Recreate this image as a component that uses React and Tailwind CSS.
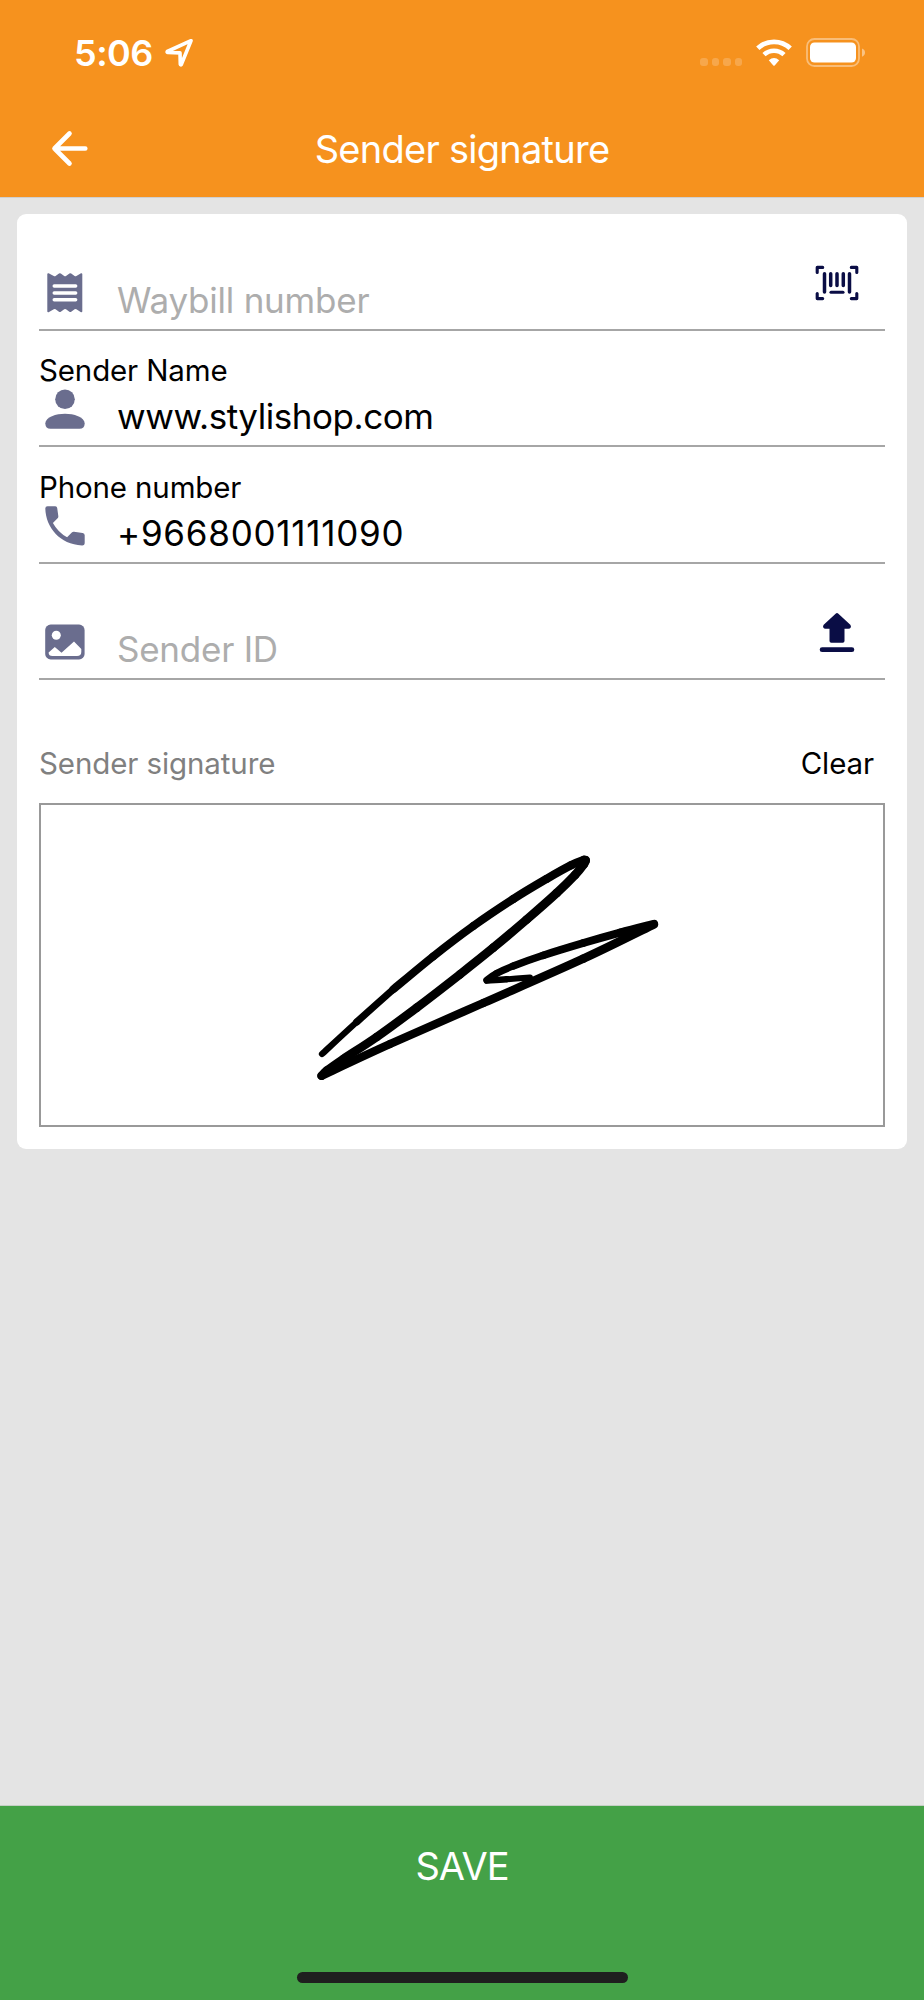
const NAVY = "#0a0d45"
const SLATE = "#6a6d8e"

// Recorded pen strokes, in signature pad pixels. Pen width goes from -> to.
const STROKES = [
  { from: 5.8, to: 7.6, points: [[281, 249], [315.7, 217], [352.3, 184.3]] },
  { from: 7.8, to: 8.6, points: [[352.3, 184.3], [392.3, 151.3], [432.3, 121], [472.3, 94], [505.7, 73.8], [530, 60.3], [543, 55]] },
  { from: 8.8, to: 8.6, points: [[543, 55], [544.6, 55.4], [543, 59], [534, 70], [515.7, 88], [485.7, 114.5], [452.3, 142.7], [419, 169.3], [375.7, 202.7], [335.7, 232], [302.3, 254], [286, 265.500], [280.5, 270.8]] },
  { from: 8.2, to: 8.6, points: [[280.5, 270.8], [349, 239], [442.3, 198], [542.3, 153.7], [613, 119.3]] },
  { from: 8.2, to: 6.8, points: [[613, 118.8], [579, 127.6], [542.3, 138], [502.3, 150.3], [472.3, 161], [455.7, 168.3], [445.8, 175]] },
  { from: 7, to: 5.6, points: [[445.8, 175.5], [465.7, 174.3], [489, 172.5]] },
]

// Catmull-Rom, one curve for each pair of points
function strokeCurves(pts) {
  return pts.slice(0, -1).map((p1, i) => {
    const p0 = pts[i - 1] || p1
    const p2 = pts[i + 1]
    const p3 = pts[i + 2] || p2
    return `M${p1[0]} ${p1[1]}C${p1[0] + (p2[0] - p0[0]) / 6} ${p1[1] + (p2[1] - p0[1]) / 6} ${p2[0] - (p3[0] - p1[0]) / 6} ${p2[1] - (p3[1] - p1[1]) / 6} ${p2[0]} ${p2[1]}`
  })
}

function ReceiptIcon() {
  return (
    <svg width="52" height="42" viewBox="0 0 52 42" fill={SLATE}>
      <path d="M8.3 2Q8.500 1 9.600 1.300L14.800 3.900Q15.700 4.400 16.600 3.900L20 1.600Q20.900 1.100 21.800 1.600L25.200 3.900Q26.100 4.400 27 3.900L30.400 1.600Q31.300 1.100 32.200 1.600L35.600 3.900Q36.500 4.400 37.400 3.900L42 1.300Q43.100 1 43.300 2V39.500Q43.100 40.500 42 40.200L37.400 37.300Q36.500 36.800 35.600 37.300L32.200 39.700Q31.300 40.300 30.400 39.700L27 37.300Q26.100 36.800 25.200 37.300L21.800 39.700Q20.900 40.300 20 39.700L16.600 37.300Q15.700 36.800 14.800 37.300L9.600 40.200Q8.500 40.500 8.300 39.500z" />
      <path d="M15.200 14h21.500M15.200 21h21.500M15.200 27.700h21.500" stroke="#fff" strokeWidth="3.400" strokeLinecap="round" />
    </svg>
  )
}

function PersonIcon() {
  return (
    <svg width="52" height="42" viewBox="0 0 52 42" fill={SLATE}>
      <circle cx="26" cy="11.300" r="9.800" />
      <path d="M6.300 35.500C6.300 29 17.500 25.800 26 25.800S45.700 29 45.700 35.500Q45.500 40.800 40.500 40.800H11.500Q6.500 40.800 6.300 35.500z" />
    </svg>
  )
}

function PhoneIcon() {
  return (
    <svg width="52" height="42" viewBox="0 0 52 42" fill={SLATE}>
      <path d="M8.500 1.300H16.300Q18 1.300 18.200 3L19.300 11Q19.500 12.300 18.600 13.200L13.900 17.900Q19 27.200 28.100 32.200L32.800 27.500Q33.700 26.600 35 26.800L43.600 28Q45.700 28.300 45.700 30.300V37.800Q45.700 40.500 43 40.400C21 39.500 6.800 22.500 6.300 3.500Q6.300 1.300 8.500 1.300z" />
    </svg>
  )
}

function ImageIcon() {
  return (
    <svg width="52" height="42" viewBox="0 0 52 42">
      <rect x="6.200" y="3.600" width="39.400" height="34.800" rx="5.500" fill={SLATE} />
      <circle cx="17.300" cy="14.200" r="4.500" fill="#fff" />
      <path d="M9.600 31.500 15.800 26 22.500 31.700 35 20.600 42.300 28V31Q42.300 35.100 38 35.100H13.500Q9.600 35.100 9.600 31.500z" fill="#fff" />
    </svg>
  )
}

function BarcodeIcon() {
  return (
    <svg width="44" height="46" viewBox="0 0 44 46" fill="none" stroke={NAVY} strokeLinecap="round" strokeLinejoin="round">
      <path d="M2.200 12.500V7.400H7.700M36.300 7.400H41.800V12.500M41.800 33.500V38.600H36.300M7.700 38.600H2.200V33.500" strokeWidth="3.100" />
      <path d="M9.500 13.800V32M34.500 13.800V32M15.700 13.800V25.600M22 13.800V25.600M28.300 13.800V25.600" strokeWidth="3.500" />
      <path d="M16 32.200H28" strokeWidth="3.100" />
    </svg>
  )
}

function UploadIcon() {
  return (
    <svg width="44" height="46" viewBox="0 0 44 46" fill={NAVY}>
      <path d="M20.600 4.700Q22 3.500 23.400 4.700L35.300 15.800Q36.500 17.200 35.600 18.700Q35 19.800 33.500 19.800H29.500V32Q29.500 33.800 27.700 33.800H16.300Q14.500 33.800 14.500 32V19.800H10.500Q9 19.800 8.400 18.700Q7.500 17.200 8.700 15.800z" />
      <rect x="4.700" y="38.300" width="34.600" height="4.800" rx="2.400" />
    </svg>
  )
}

function StatusBar() {
  return (
    <div className="flex h-[106px] items-center justify-between pr-[58px] pl-[74px]">
      <div className="flex items-center gap-3">
        <span className="text-[36px] leading-none font-semibold tracking-[-0.5px]">5:06</span>
        <svg width="30" height="30" viewBox="0 0 30 30" fill="none" stroke="#fff" strokeWidth="3.600" strokeLinejoin="round">
          <path d="M26 2.700 2.300 13.500Q1.800 14.300 3 14.500L15 14.900 15.300 26.300Q15.600 27.300 16.300 26.500z" />
        </svg>
      </div>
      <div className="flex items-center">
        <div className="mt-[18px] mr-[14px] flex gap-1">
          {[0, 1, 2, 3].map((i) => (
            <span key={i} className="size-[7.500px] rounded-[3px] bg-white/20" />
          ))}
        </div>
        <svg className="mr-[14px] -mt-px" width="36" height="28" viewBox="0 0 36 28" fill="none" stroke="#fff">
          <path d="M1.800 9.300A23.500 23.500 0 0 1 34.200 9.300" strokeWidth="4.800" />
          <path d="M8 15.700A14.500 14.500 0 0 1 28 15.700" strokeWidth="4.600" />
          <path d="M12.800 21.200Q18 17 23.200 21.200L18.700 26.500Q18 27.200 17.300 26.500z" fill="#fff" stroke="none" />
        </svg>
        <svg className="-mt-0.5" width="60" height="30" viewBox="0 0 60 30">
          <rect x="1" y="2" width="52" height="27" rx="7.500" fill="none" stroke="#fff" strokeOpacity=".4" strokeWidth="1.800" />
          <rect x="4" y="5.500" width="46" height="20" rx="4.500" fill="#fff" />
          <path d="M56 11.500Q59 12.500 59 15.500T56 19.800z" fill="#fff" fillOpacity=".45" />
        </svg>
      </div>
    </div>
  )
}

function Field({ label, icon, children, action }) {
  return (
    <div className="flex h-[116.600px] flex-col justify-end border-b-2 border-[#a6a6a6]">
      {label && <div className="text-[29.500px] leading-9 tracking-[-0.14px] text-black">{label}</div>}
      <div className="flex h-[57px] items-start">
        {icon}
        <div className="ml-[26px] flex-1 text-[35px] leading-[56px]">{children}</div>
        {action && <button className="-mt-3 mr-[26px]">{action}</button>}
      </div>
    </div>
  )
}

export default function App() {
  return (
    <div className="flex h-[2000px] w-[924px] flex-col bg-[#e4e4e4] font-[Inter,sans-serif]">
      <header className="h-[197px] bg-[#f6921e] text-white">
        <StatusBar />
        <div className="flex h-[86px] items-center">
          <button className="ml-[51px] w-[38px]">
            <svg width="38" height="38" viewBox="0 0 38 38" fill="none" stroke="#fff" strokeWidth="4.600" strokeLinecap="round" strokeLinejoin="round">
              <path d="M34.300 18.500H3.500M18.500 3.500 3.500 18.500 18.500 33.500" />
            </svg>
          </button>
          <h1 className="mr-[89px] flex-1 text-center text-[38px] leading-none tracking-[-0.74px]">Sender signature</h1>
        </div>
      </header>

      <main className="flex-1 border-t border-[#cfcfcf] px-[17px] pt-4">
        <div className="h-[935px] rounded-[9px] bg-white px-[22px]">
          <Field icon={<ReceiptIcon />} action={<BarcodeIcon />}>
            <span className="tracking-[-0.22px] text-[#adadad]">Waybill number</span>
          </Field>
          <Field label="Sender Name" icon={<PersonIcon />}>
            <span className="tracking-[-0.45px] text-black">www.stylishop.com</span>
          </Field>
          <Field label="Phone number" icon={<PhoneIcon />}>
            <span className="tracking-[0.75px] text-black">+9668001111090</span>
          </Field>
          <Field icon={<ImageIcon />} action={<UploadIcon />}>
            <span className="tracking-[-0.25px] text-[#adadad]">Sender ID</span>
          </Field>

          <div className="mt-[63px] flex h-10 items-center justify-between pr-[11px] text-[29.500px] tracking-[-0.1px]">
            <span className="text-[#808080]">Sender signature</span>
            <button className="text-black">Clear</button>
          </div>

          {/* Signature pad */}
          <div className="mt-5 h-[324px] border-2 border-[#999]">
            <svg width="842" height="320" fill="none" stroke="#000" strokeLinecap="round">
              {STROKES.map((s, i) =>
                strokeCurves(s.points).map((d, j, all) => (
                  <path key={`${i}-${j}`} d={d} strokeWidth={s.from + ((s.to - s.from) * (j + 0.5)) / all.length} />
                ))
              )}
            </svg>
          </div>
        </div>
      </main>

      <footer className="flex h-[195px] flex-col items-center border-t border-[#c4cfc4] bg-[#44a147] text-white">
        <button className="mt-10 text-[38px] leading-10 tracking-[-1px]">SAVE</button>
        <div className="mt-[86px] h-[11px] w-[331px] rounded-full bg-[#1f1f1f]" />
      </footer>
    </div>
  )
}
